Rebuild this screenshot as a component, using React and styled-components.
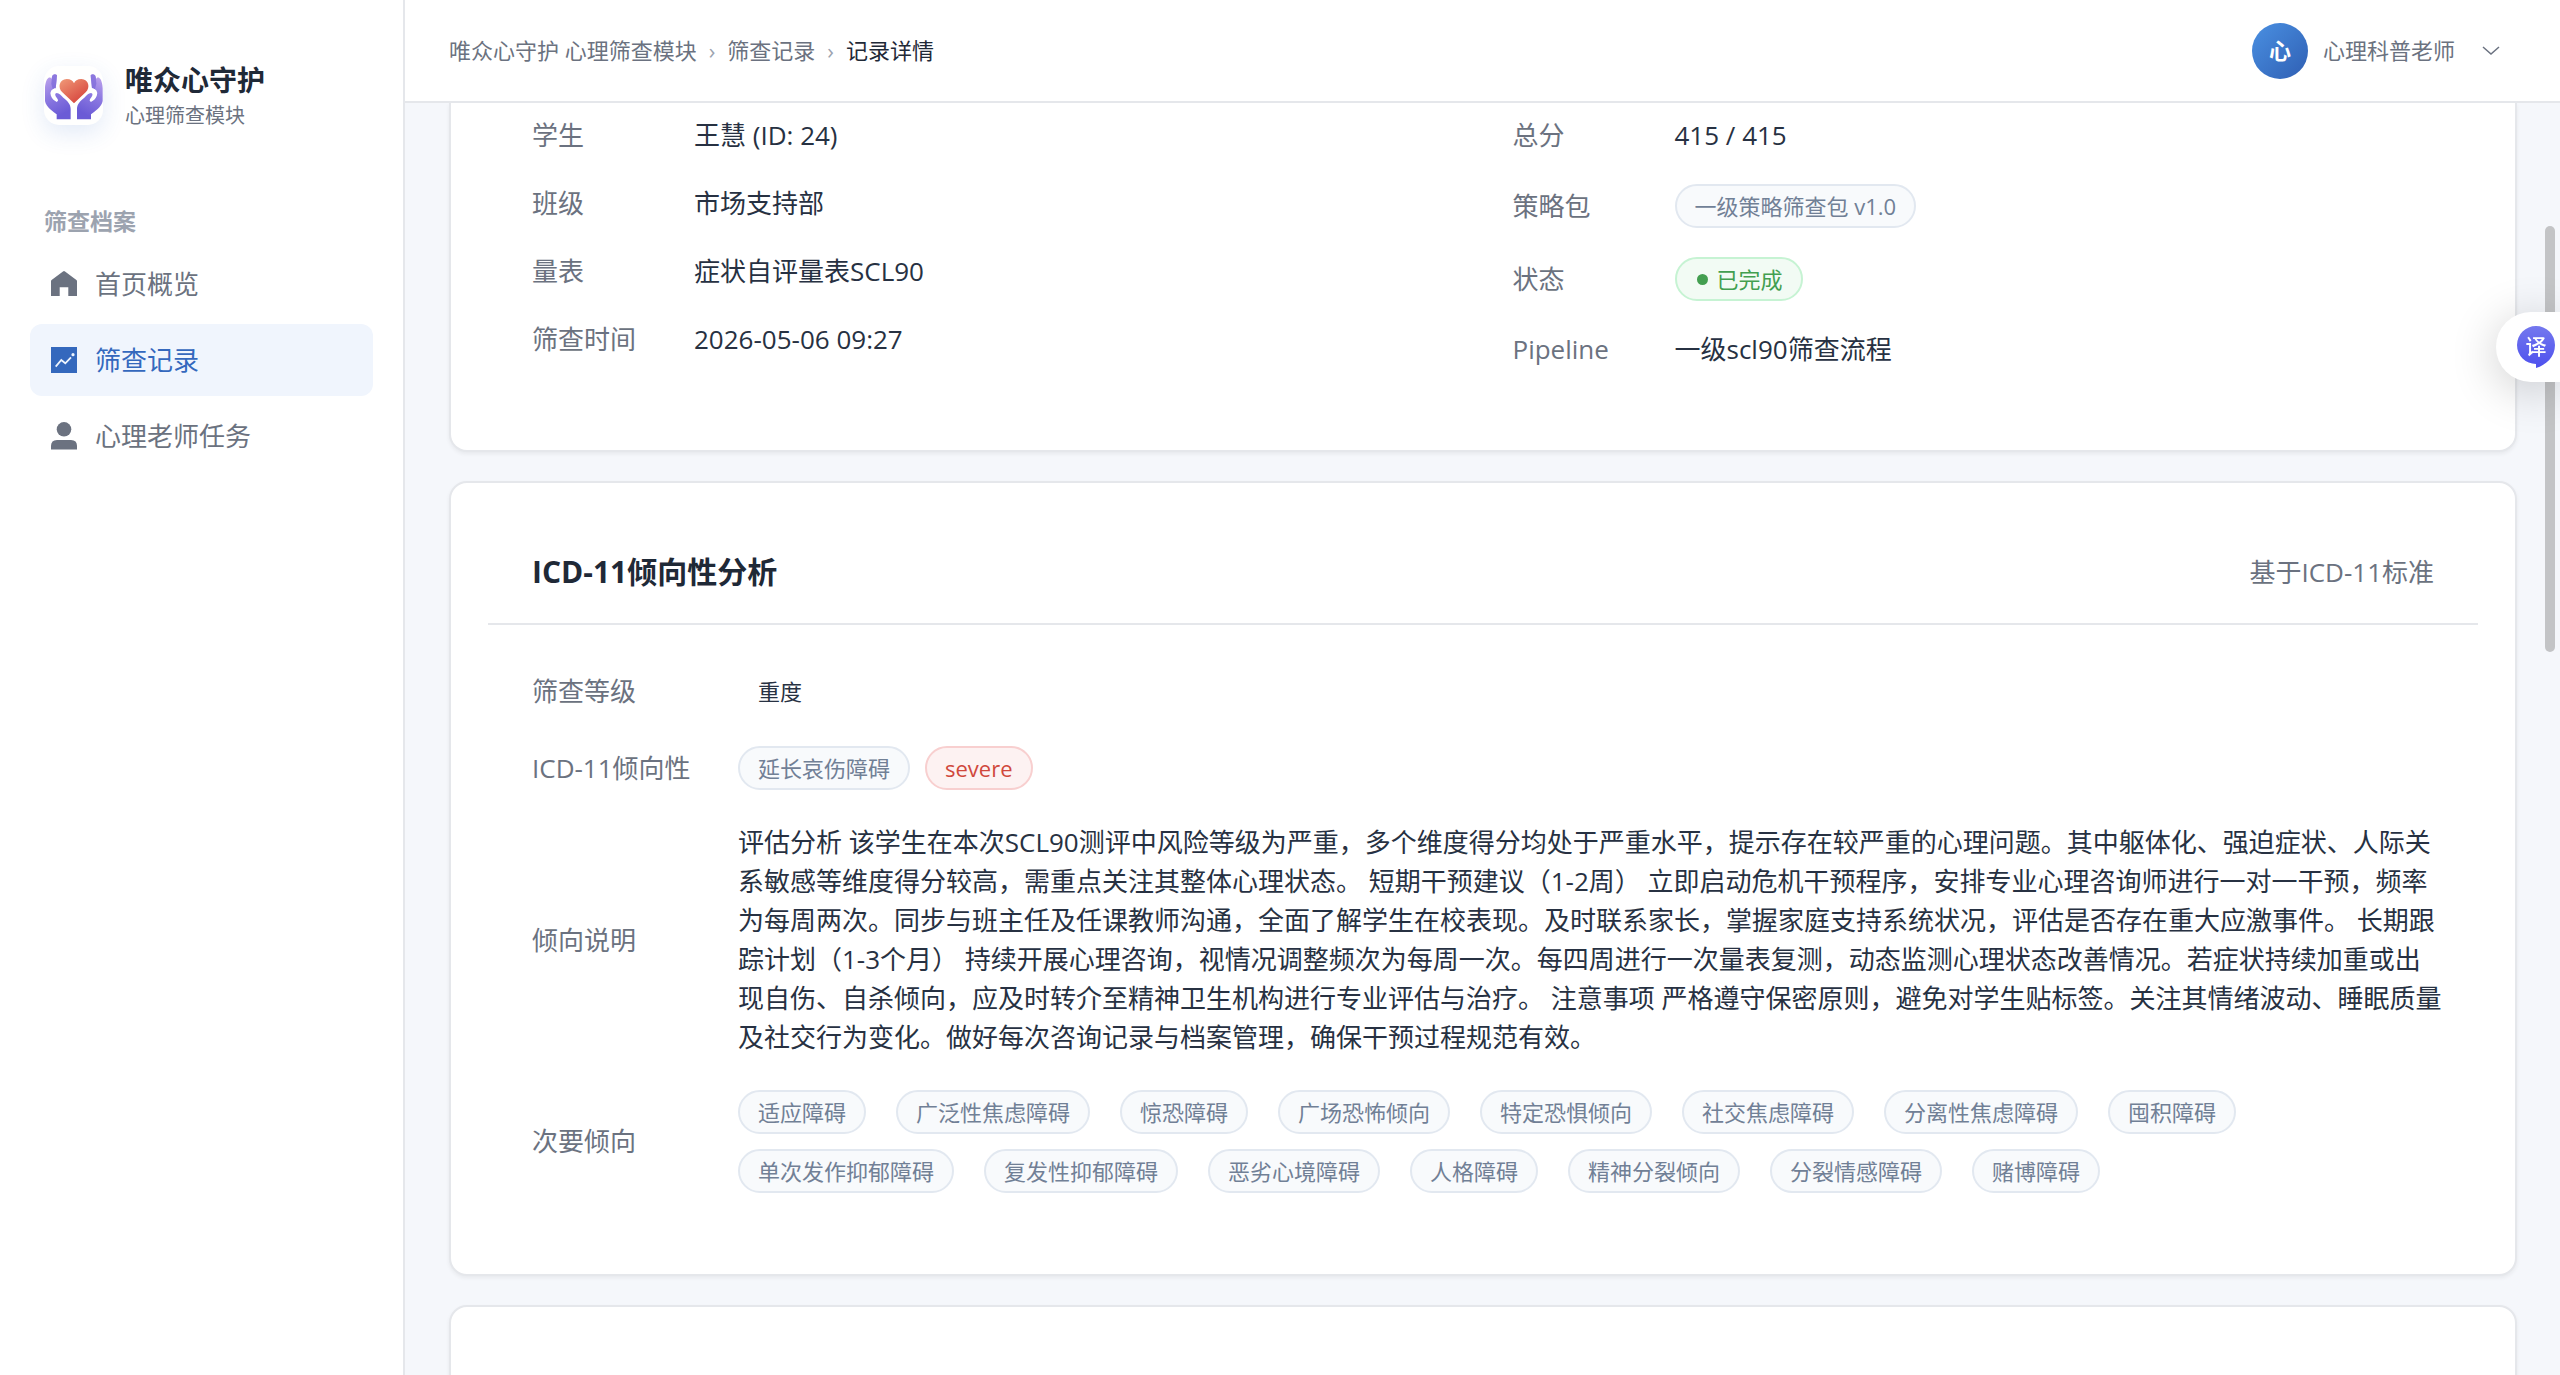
import React from 'react';
import styled, { createGlobalStyle, css } from 'styled-components';

const color = {
  page: '#f5f7fb',
  surface: '#ffffff',
  line: '#e5e7eb',
  ink: '#1f2937',
  text: '#273142',
  muted: '#6b7280',
  faint: '#9ca3af',
  brand: '#3468bd',
  brandSoft: '#f0f5fd',
};

const GlobalStyle = createGlobalStyle`
  *, *::before, *::after { box-sizing: border-box; }
  body {
    margin: 0;
    background: ${color.page};
    color: ${color.text};
    font-family: "Open Sans", "Noto Sans", "Noto Sans CJK SC", sans-serif;
    font-size: 26px;
    line-height: 39px;
  }
  a { color: inherit; text-decoration: none; }
  button { font: inherit; border: 0; background: none; padding: 0; cursor: pointer; }
  h1, h2, p, ul, ol, dl, dd { margin: 0; padding: 0; }
  ul, ol { list-style: none; }
`;

const Shell = styled.div`
  display: flex;
  height: 100vh;
  overflow: hidden;
`;

const Sidebar = styled.aside`
  flex: 0 0 405px;
  padding: 59px 30px 0;
  background: ${color.surface};
  border-right: 2px solid ${color.line};
`;

const Brand = styled.div`
  display: flex;
  align-items: center;
  gap: 22px;
  padding: 0 14px;
`;

const Logo = styled.div`
  width: 59px;
  height: 59px;
  border-radius: 15px;
  overflow: hidden;
  background: #fffffe;
  box-shadow: 0 8px 24px rgba(52, 104, 200, 0.14);
  svg { display: block; width: 100%; height: 100%; }
`;

const BrandName = styled.div`
  font-size: 28px;
  font-weight: 700;
  line-height: 42px;
  color: ${color.ink};
`;

const BrandSub = styled.div`
  font-size: 20px;
  line-height: 30px;
  color: ${color.muted};
`;

const SectionTitle = styled.h2`
  padding: 72px 14px 9px;
  font-size: 23px;
  font-weight: 700;
  line-height: 36px;
  color: ${color.faint};
`;

const Menu = styled.ul`
  display: grid;
  gap: 4px;
`;

const MenuLink = styled.a`
  display: flex;
  align-items: center;
  gap: 18px;
  height: 72px;
  padding: 0 21px;
  border-radius: 12px;
  color: ${(p) => (p.$active ? color.brand : color.muted)};
  background: ${(p) => (p.$active ? color.brandSoft : 'transparent')};
  svg { flex: none; width: 26px; height: 28px; }
`;

const Column = styled.div`
  flex: 1;
  min-width: 0;
  display: flex;
  flex-direction: column;
`;

const TopBar = styled.header`
  flex: none;
  display: flex;
  align-items: center;
  justify-content: space-between;
  height: 103px;
  padding: 0 60px 0 44px;
  background: ${color.surface};
  border-bottom: 2px solid ${color.line};
  font-size: 22px;
`;

const Crumbs = styled.ol`
  display: flex;
  gap: 12px;
  color: ${color.muted};
`;

const CrumbMark = styled.li`
  color: ${color.faint};
`;

const CrumbCurrent = styled.li`
  color: ${color.ink};
`;

const UserButton = styled.button`
  display: flex;
  align-items: center;
  gap: 15px;
  color: ${color.muted};
  svg { width: 18px; height: 12px; margin-left: 12px; }
`;

const Avatar = styled.span`
  display: grid;
  place-items: center;
  width: 56px;
  height: 56px;
  border-radius: 50%;
  background: linear-gradient(135deg, #4a90e2, #2f5fb3);
  color: #fff;
  font-weight: 700;
`;

const Content = styled.main`
  flex: 1;
  min-height: 0;
  overflow: hidden;
  display: flex;
  flex-direction: column;
  gap: 29px;
  padding: 0 43px 0 44px;
`;

const Card = styled.section`
  flex: none;
  padding: 38px 37px;
  background: ${color.surface};
  border: 2px solid ${color.line};
  border-radius: 18px;
  box-shadow: 0 2px 4px rgba(0, 0, 0, 0.06);
  ${(p) => p.$continued && css`
    padding-top: 13px;
    border-top: 0;
    border-top-left-radius: 0;
    border-top-right-radius: 0;
  `}
`;

const CardHeader = styled.header`
  display: flex;
  align-items: center;
  justify-content: space-between;
  padding: 30px 44px;
  border-bottom: 2px solid ${color.line};
`;

const CardTitle = styled.h1`
  font-size: 30px;
  font-weight: 700;
  line-height: 42px;
  color: ${color.ink};
`;

const CardNote = styled.span`
  color: ${color.muted};
`;

const InfoGrid = styled.div`
  display: grid;
  grid-template-columns: 1fr 1fr;
  column-gap: 59px;
  padding: 0 44px 43px;
`;

const InfoList = styled.dl`
  display: flex;
  flex-direction: column;
  gap: 29px;
`;

const InfoRow = styled.div`
  display: grid;
  grid-template-columns: 162px 1fr;
  align-items: center;
`;

const Analysis = styled.dl`
  display: grid;
  gap: 33px;
  padding: 44px 32px 43px 44px;
`;

const AnalysisRow = styled.div`
  display: grid;
  grid-template-columns: 206px 1fr;
  align-items: center;
`;

const Label = styled.dt`
  color: ${color.muted};
`;

const TagRow = styled.dd`
  display: flex;
  flex-wrap: wrap;
  gap: 15px;
`;

const TagList = styled.ul`
  display: flex;
  flex-wrap: wrap;
  gap: 15px 30px;
`;

const tones = {
  neutral: ['#718096', '#f8fafc', '#e2e8f0'],
  success: ['#439f50', '#f2fbf4', '#c6f3d3'],
  danger: ['#d0483c', '#fdf2f2', '#f8cfcf'],
  plain: [color.text, 'transparent', 'transparent'],
};

const Tag = styled.span`
  display: inline-flex;
  align-items: center;
  gap: 9px;
  height: 44px;
  padding: 0 18px;
  border: 2px solid ${(p) => tones[p.$tone || 'neutral'][2]};
  border-radius: 22px;
  background: ${(p) => tones[p.$tone || 'neutral'][1]};
  color: ${(p) => tones[p.$tone || 'neutral'][0]};
  font-size: 22px;
  line-height: 40px;
  white-space: nowrap;
`;

const Dot = styled.i`
  width: 11px;
  height: 11px;
  margin-left: 2px;
  border-radius: 50%;
  background: currentColor;
`;

const NextCard = styled(Card)`
  min-height: 400px;
`;

const ScrollThumb = styled.div`
  position: fixed;
  top: 226px;
  right: 5px;
  width: 10px;
  height: 426px;
  border-radius: 5px;
  background: #c3c4c6;
`;

const Translate = styled.button`
  position: fixed;
  top: 312px;
  right: 0;
  display: flex;
  align-items: center;
  width: 64px;
  height: 70px;
  padding-left: 21px;
  border-radius: 35px 0 0 35px;
  background: #fff;
  box-shadow: 0 8px 48px rgba(0, 0, 0, 0.2);
`;

const Bubble = styled.span`
  position: relative;
  display: grid;
  place-items: center;
  width: 38px;
  height: 42px;
  padding-bottom: 3px;
  color: #fff;
  font-size: 21px;
  line-height: 30px;
  svg { position: absolute; inset: 0; }
  b { position: relative; font-weight: 500; }
`;

const HandPath =
  'M45 112 C45 100 49 85 55 81 C59 78 64 80 64 84 L66 77 C67 69 77 67 81 73 L80 88 L77 112 C70 114 63 120 64 130 C66 140 74 147 80 151 C85 152 85 146 80 140 C74 133 74 127 80 126 C88 126 93 134 100 140 C113 150 122 160 122 174 L122 205 L80 205 L80 190 C70 182 48 168 45 150 Z';

function BrandLogo() {
  return (
    <svg viewBox="42 45 177 177" aria-hidden="true">
      <defs>
        <linearGradient id="hand" x1="0" y1="0" x2="0.3" y2="1">
          <stop offset="0" stopColor="#c4a9ee" />
          <stop offset="0.5" stopColor="#8f7ce2" />
          <stop offset="1" stopColor="#6b5bd6" />
        </linearGradient>
        <linearGradient id="heart" x1="0" y1="0" x2="0.8" y2="1">
          <stop offset="0" stopColor="#f09a78" />
          <stop offset="1" stopColor="#d5403a" />
        </linearGradient>
      </defs>
      <g id="left-hand">
        <path d={HandPath} fill="url(#hand)" />
        <path d="M66 77 C67 69 77 67 81 73 L77 112 L68 114 L64 98 Z" fill="#7a68d8" opacity="0.7" />
        <path d="M77 114 C68 117 62 122 66 133 C69 141 76 147 82 150" fill="none" stroke="#fff" strokeWidth="7" />
      </g>
      <use href="#left-hand" transform="translate(263 0) scale(-1 1)" />
      <path
        d="M132 157 L97 124 C82 110 88 84 110 84 C122 84 129 89 132 97 C135 89 142 84 154 84 C176 84 182 110 167 124 Z"
        fill="url(#heart)"
      />
    </svg>
  );
}

const icons = {
  home: (
    <svg viewBox="0 0 26 28" aria-hidden="true">
      <path d="M12 1.4 Q13 .7 14 1.4 L25.4 10 Q26 10.5 26 11.3 V26 H17.3 V17.3 H8.7 V26 H0 V11.3 Q0 10.5 .6 10 Z" fill="currentColor" />
    </svg>
  ),
  chart: (
    <svg viewBox="0 0 26 28" aria-hidden="true">
      <path d="M0 1 H26 V27 H0 Z" fill="currentColor" />
      <path d="M4.7 20.7 L10.3 14 L14.3 17.3 L20 11.3" fill="none" stroke="#eef4fd" strokeWidth="1.8" />
      <circle cx="22" cy="8.7" r="1.6" fill="#eef4fd" />
    </svg>
  ),
  user: (
    <svg viewBox="0 0 26 28" aria-hidden="true">
      <circle cx="13" cy="7.3" r="7.3" fill="currentColor" />
      <path d="M0 27.5 V24 Q0 18 6 18 H20 Q26 18 26 24 V27.5 Z" fill="currentColor" />
    </svg>
  ),
};

const menu = [
  { icon: 'home', text: '首页概览' },
  { icon: 'chart', text: '筛查记录', active: true },
  { icon: 'user', text: '心理老师任务' },
];

const student = [
  ['学生', '王慧 (ID: 24)'],
  ['班级', '市场支持部'],
  ['量表', '症状自评量表SCL90'],
  ['筛查时间', '2026-05-06 09:27'],
];

const result = [
  ['总分', '415 / 415'],
  ['策略包', <Tag>一级策略筛查包 v1.0</Tag>],
  ['状态', <Tag $tone="success"><Dot />已完成</Tag>],
  ['Pipeline', '一级scl90筛查流程'],
];

const explanation =
  '评估分析 该学生在本次SCL90测评中风险等级为严重，多个维度得分均处于严重水平，提示存在较严重的心理问题。其中躯体化、强迫症状、人际关系敏感等维度得分较高，需重点关注其整体心理状态。 短期干预建议（1-2周） 立即启动危机干预程序，安排专业心理咨询师进行一对一干预，频率为每周两次。同步与班主任及任课教师沟通，全面了解学生在校表现。及时联系家长，掌握家庭支持系统状况，评估是否存在重大应激事件。 长期跟踪计划（1-3个月） 持续开展心理咨询，视情况调整频次为每周一次。每四周进行一次量表复测，动态监测心理状态改善情况。若症状持续加重或出现自伤、自杀倾向，应及时转介至精神卫生机构进行专业评估与治疗。 注意事项 严格遵守保密原则，避免对学生贴标签。关注其情绪波动、睡眠质量及社交行为变化。做好每次咨询记录与档案管理，确保干预过程规范有效。';

const secondary = [
  '适应障碍', '广泛性焦虑障碍', '惊恐障碍', '广场恐怖倾向', '特定恐惧倾向', '社交焦虑障碍', '分离性焦虑障碍', '囤积障碍',
  '单次发作抑郁障碍', '复发性抑郁障碍', '恶劣心境障碍', '人格障碍', '精神分裂倾向', '分裂情感障碍', '赌博障碍',
];

function Info({ rows }) {
  return (
    <InfoList>
      {rows.map(([label, value]) => (
        <InfoRow key={label}>
          <Label>{label}</Label>
          {typeof value === 'string' ? <dd>{value}</dd> : <TagRow>{value}</TagRow>}
        </InfoRow>
      ))}
    </InfoList>
  );
}

export default function App() {
  return (
    <>
      <GlobalStyle />
      <Shell>
        <Sidebar>
          <Brand>
            <Logo><BrandLogo /></Logo>
            <div>
              <BrandName>唯众心守护</BrandName>
              <BrandSub>心理筛查模块</BrandSub>
            </div>
          </Brand>
          <SectionTitle>筛查档案</SectionTitle>
          <nav>
            <Menu>
              {menu.map((item) => (
                <li key={item.text}>
                  <MenuLink href="#" $active={item.active}>
                    {icons[item.icon]}
                    {item.text}
                  </MenuLink>
                </li>
              ))}
            </Menu>
          </nav>
        </Sidebar>
        <Column>
          <TopBar>
            <Crumbs>
              <li><a href="#">唯众心守护 心理筛查模块</a></li>
              <CrumbMark>›</CrumbMark>
              <li><a href="#">筛查记录</a></li>
              <CrumbMark>›</CrumbMark>
              <CrumbCurrent>记录详情</CrumbCurrent>
            </Crumbs>
            <UserButton type="button">
              <Avatar>心</Avatar>
              心理科普老师
              <svg viewBox="0 0 18 12" aria-hidden="true">
                <path d="M1 2 L9 9 L17 2" fill="none" stroke="currentColor" strokeWidth="1.5" />
              </svg>
            </UserButton>
          </TopBar>
          <Content>
            <Card $continued>
              <InfoGrid>
                <Info rows={student} />
                <Info rows={result} />
              </InfoGrid>
            </Card>
            <Card>
              <CardHeader>
                <CardTitle>ICD-11倾向性分析</CardTitle>
                <CardNote>基于ICD-11标准</CardNote>
              </CardHeader>
              <Analysis>
                <AnalysisRow>
                  <Label>筛查等级</Label>
                  <TagRow><Tag $tone="plain">重度</Tag></TagRow>
                </AnalysisRow>
                <AnalysisRow>
                  <Label>ICD-11倾向性</Label>
                  <TagRow>
                    <Tag>延长哀伤障碍</Tag>
                    <Tag $tone="danger">severe</Tag>
                  </TagRow>
                </AnalysisRow>
                <AnalysisRow>
                  <Label>倾向说明</Label>
                  <dd>{explanation}</dd>
                </AnalysisRow>
                <AnalysisRow>
                  <Label>次要倾向</Label>
                  <dd>
                    <TagList>
                      {secondary.map((name) => (
                        <li key={name}><Tag>{name}</Tag></li>
                      ))}
                    </TagList>
                  </dd>
                </AnalysisRow>
              </Analysis>
            </Card>
            <NextCard />
          </Content>
        </Column>
      </Shell>
      <ScrollThumb />
      <Translate type="button" aria-label="翻译">
        <Bubble>
          <svg viewBox="0 0 38 42" aria-hidden="true">
            <defs>
              <linearGradient id="bubble" x1="0" y1="0" x2="0" y2="1">
                <stop offset="0" stopColor="#7478ee" />
                <stop offset="1" stopColor="#4d50ee" />
              </linearGradient>
            </defs>
            <path d="M19 0 A19 19 0 0 1 38 19 C38 31 29 39 19 42 V38 A19 19 0 0 1 19 0 Z" fill="url(#bubble)" />
          </svg>
          <b>译</b>
        </Bubble>
      </Translate>
    </>
  );
}
